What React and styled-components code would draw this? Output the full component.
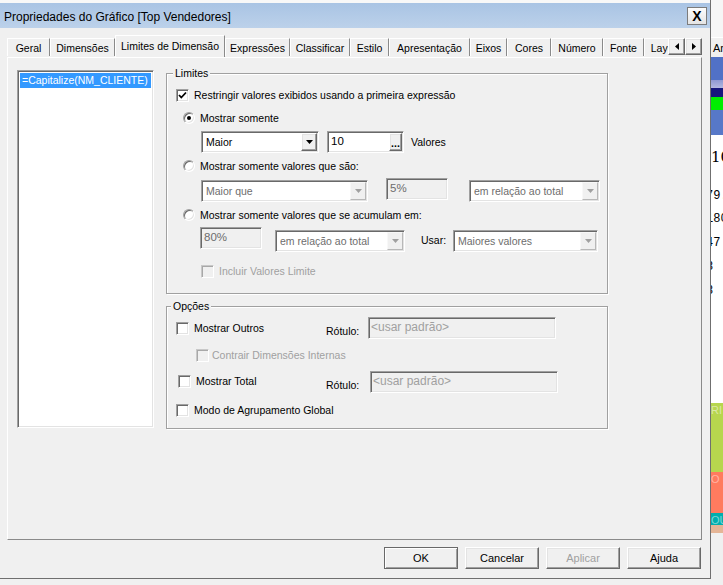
import React from "react";
import styled, { createGlobalStyle, css } from "styled-components";

const GlobalStyle = createGlobalStyle`
  html, body {
    margin: 0;
    padding: 0;
    background: #f0f0f0;
  }
  body {
    font-family: "Liberation Sans", Arial, sans-serif;
    font-size: 10.5px;
    color: #000;
  }
  * {
    box-sizing: border-box;
  }
`;

const sunken = css`
  border-style: solid;
  border-width: 1px;
  border-color: #a0a0a0 #fff #fff #a0a0a0;
  box-shadow: inset 1px 1px 0 #696969, inset -1px -1px 0 #e3e3e3;
`;

const raised = css`
  border-style: solid;
  border-width: 1px;
  border-color: #fff #696969 #696969 #fff;
  box-shadow: inset -1px -1px 0 #a0a0a0, inset 1px 1px 0 #e3e3e3;
`;

const TABS = [
  { label: "Geral", w: 43 },
  { label: "Dimensões", w: 65 },
  { label: "Limites de Dimensão", w: 110, active: true },
  { label: "Expressões", w: 65 },
  { label: "Classificar", w: 60 },
  { label: "Estilo", w: 39 },
  { label: "Apresentação", w: 81 },
  { label: "Eixos", w: 37 },
  { label: "Cores", w: 44 },
  { label: "Número", w: 52 },
  { label: "Fonte", w: 41 },
  { label: "Layout", w: 45 },
];

const Check = ({ checked, disabled }) => (
  <CheckBox $disabled={disabled}>
    {checked && (
      <svg width="9" height="9" viewBox="0 0 9 9">
        <polyline points="1,4 3.3,6.5 8,1.5" fill="none" stroke="#000" strokeWidth="1.8" />
      </svg>
    )}
  </CheckBox>
);

const Radio = ({ checked }) => (
  <RadioDot>{checked && <RadioMark />}</RadioDot>
);

const Arrow = ({ dir = "down", color = "#000" }) => {
  const pts = {
    down: "0,0 7,0 3.5,4",
    left: "4,0 4,7 0,3.5",
    right: "0,0 0,7 4,3.5",
  }[dir];
  const size = dir === "down" ? [7, 4] : [4, 7];
  return (
    <svg width={size[0]} height={size[1]} viewBox={`0 0 ${size[0]} ${size[1]}`}>
      <polygon points={pts} fill={color} />
    </svg>
  );
};

const Dropdown = ({ text, w, h = 22, ml, self, disabled }) => (
  <Select $w={w} $h={h} $ml={ml} $self={self}>
    <SelectText $disabled={disabled}>{text}</SelectText>
    <SelectButton $disabled={disabled}>
      <Arrow color={disabled ? "#a0a0a0" : "#000"} />
    </SelectButton>
  </Select>
);

export default function App() {
  return (
    <>
      <GlobalStyle />
      <Screen>
        <Dialog>
          <TopEdge />
          <TitleBar>
            <Title>Propriedades do Gráfico [Top Vendedores]</Title>
            <CloseButton>X</CloseButton>
          </TitleBar>
          <Body>
            <TabRow>
              <TabStrip>
                {TABS.map((t) => (
                  <Tab key={t.label} $w={t.w} $active={t.active}>
                    {t.label}
                  </Tab>
                ))}
              </TabStrip>
              <TabScroller>
                <ScrollButton>
                  <Arrow dir="left" />
                </ScrollButton>
                <ScrollButton>
                  <Arrow dir="right" />
                </ScrollButton>
              </TabScroller>
            </TabRow>
            <Panel>
              <ListBox>
                <ListItem>=Capitalize(NM_CLIENTE)</ListItem>
              </ListBox>
              <Groups>
                <Group $mt={3} $h={221}>
                  <Legend $left={6}>Limites</Legend>
                  <Row $mt={15} $h={13} $ml={9}>
                    <Check checked />
                    <Label>Restringir valores exibidos usando a primeira expressão</Label>
                  </Row>
                  <Row $mt={10} $h={12} $ml={16}>
                    <Radio checked />
                    <Label>Mostrar somente</Label>
                  </Row>
                  <Row $mt={7} $h={22} $ml={34}>
                    <Dropdown text="Maior" w={118} />
                    <TextBox $w={77} $h={22} $ml={8}>
                      <BoxText>10</BoxText>
                      <EllipsisButton>...</EllipsisButton>
                    </TextBox>
                    <Label $ml={7}>Valores</Label>
                  </Row>
                  <Row $mt={7} $h={12} $ml={16}>
                    <Radio />
                    <Label>Mostrar somente valores que são:</Label>
                  </Row>
                  <Row $mt={6} $h={24} $ml={34}>
                    <Dropdown text="Maior que" w={167} self="flex-end" disabled />
                    <TextBox $w={62} $h={22} $ml={18} $self="flex-start" $disabled>
                      <BoxText $disabled>5%</BoxText>
                    </TextBox>
                    <Dropdown text="em relação ao total" w={131} ml={21} self="flex-end" disabled />
                  </Row>
                  <Row $mt={7} $h={12} $ml={16}>
                    <Radio />
                    <Label>Mostrar somente valores que se acumulam em:</Label>
                  </Row>
                  <Row $mt={6} $h={25} $ml={33}>
                    <TextBox $w={62} $h={22} $self="flex-start" $disabled>
                      <BoxText $disabled>80%</BoxText>
                    </TextBox>
                    <Dropdown text="em relação ao total" w={130} ml={13} self="flex-end" disabled />
                    <Label $ml={16} $w={32} $self="flex-end" $pb={5}>
                      Usar:
                    </Label>
                    <Dropdown text="Maiores valores" w={145} self="flex-end" disabled />
                  </Row>
                  <Row $mt={13} $h={13} $ml={34}>
                    <Check disabled />
                    <Label $disabled>Incluir Valores Limite</Label>
                  </Row>
                </Group>

                <Group $mt={12} $h={123}>
                  <Legend $left={4}>Opções</Legend>
                  <Row $mt={10} $h={22} $ml={9}>
                    <CheckArea $w={150}>
                      <Check />
                      <Label>Mostrar Outros</Label>
                    </CheckArea>
                    <Label $ml={0} $w={42} $self="flex-end" $pb={1}>
                      Rótulo:
                    </Label>
                    <TextBox $w={188} $h={22} $disabled>
                      <Placeholder>&lt;usar padrão&gt;</Placeholder>
                    </TextBox>
                  </Row>
                  <Row $mt={10} $h={13} $ml={29}>
                    <Check disabled />
                    <Label $ml={3} $disabled>Contrair Dimensões Internas</Label>
                  </Row>
                  <Row $mt={8} $h={23} $ml={11}>
                    <CheckArea $w={148}>
                      <Check />
                      <Label>Mostrar Total</Label>
                    </CheckArea>
                    <Label $ml={0} $w={44} $self="flex-end" $pb={1}>
                      Rótulo:
                    </Label>
                    <TextBox $w={188} $h={22} $disabled>
                      <Placeholder>&lt;usar padrão&gt;</Placeholder>
                    </TextBox>
                  </Row>
                  <Row $mt={11} $h={13} $ml={9}>
                    <Check />
                    <Label>Modo de Agrupamento Global</Label>
                  </Row>
                </Group>
              </Groups>
            </Panel>
            <ButtonBar>
              <Button $default>OK</Button>
              <Button>Cancelar</Button>
              <Button $disabled>Aplicar</Button>
              <Button>Ajuda</Button>
            </ButtonBar>
          </Body>
        </Dialog>

        <AppStrip>
          <StripBlock $h={37} $bg="#f6f6f6" />
          <StripTab>Ar</StripTab>
          <StripBlock $h={23} $bg="#5171c6" />
          <StripBlock $h={8} $bg="linear-gradient(#8f98d2, #b4b8e0)" />
          <StripBlock $h={9} $bg="#17177c" />
          <StripBlock $h={13} $bg="#00ee00" />
          <StripBlock $h={25} $bg="#5778c8" />
          <NumberArea>
            <BigNum>10</BigNum>
            <Num $mt={25}>79.</Num>
            <Num $mt={10}>180</Num>
            <Num $mt={11}>47</Num>
            <Num $mt={11}>8</Num>
            <Num $mt={11} $ml={-5}>8</Num>
          </NumberArea>
          <StripBlock $h={69} $bg="#b7d64e" $fg="#dbe9a6">RI</StripBlock>
          <StripBlock $h={41} $bg="#ff7b5f" $fg="#ffb3a3">O</StripBlock>
          <StripBlock $h={12} $bg="#00aeae" $fg="#7fd6d6">OU</StripBlock>
          <StripBlock $h={8} $bg="#e5b596" />
        </AppStrip>
      </Screen>
    </>
  );
}

const Screen = styled.div`
  display: flex;
  width: 723px;
  height: 585px;
  overflow: hidden;
  background: #f0f0f0;
`;

const Dialog = styled.div`
  width: 711px;
  height: 579px;
  flex-shrink: 0;
  display: flex;
  flex-direction: column;
  background: #f0f0f0;
  border-right: 1px solid #6f6f6f;
  border-bottom: 1px solid #6f6f6f;
`;

const TopEdge = styled.div`
  height: 3px;
  background: #f8f8f8;
`;

const TitleBar = styled.div`
  height: 25px;
  display: flex;
  align-items: center;
  justify-content: space-between;
  padding: 0 3px 0 4px;
  background: linear-gradient(to bottom, #a9c4e4, #bcd1ea);
`;

const Title = styled.div`
  font-size: 12px;
  padding-top: 2px;
  color: #000;
`;

const CloseButton = styled.div`
  width: 20px;
  height: 18px;
  display: flex;
  align-items: center;
  justify-content: center;
  border: 1px solid #7c7c7c;
  background: linear-gradient(#fdfdfd, #e4e4e4);
  font-size: 14px;
  font-weight: bold;
`;

const Body = styled.div`
  flex: 1;
  display: flex;
  flex-direction: column;
  padding: 8px 8px 0 7px;
`;

const TabRow = styled.div`
  height: 21px;
  display: flex;
  align-items: flex-end;
`;

const TabStrip = styled.div`
  width: 661px;
  height: 22px;
  display: flex;
  align-items: flex-start;
  overflow: hidden;
  position: relative;
  z-index: 1;
`;

const Tab = styled.div`
  flex-shrink: 0;
  width: ${(p) => p.$w}px;
  height: ${(p) => (p.$active ? 22 : 18)}px;
  margin-top: ${(p) => (p.$active ? 0 : 3)}px;
  display: flex;
  align-items: center;
  justify-content: center;
  white-space: nowrap;
  background: #f0f0f0;
  border-top: 1px solid #fff;
  border-left: 1px solid #fff;
  border-right: 1px solid #8a8a8a;
  padding-bottom: ${(p) => (p.$active ? 2 : 0)}px;
`;

const TabScroller = styled.div`
  display: flex;
  align-self: flex-start;
  margin-top: 2px;
`;

const ScrollButton = styled.div`
  width: 17px;
  height: 17px;
  display: flex;
  align-items: center;
  justify-content: center;
  background: #f0f0f0;
  ${raised};
`;

const Panel = styled.div`
  height: 483px;
  display: flex;
  align-items: flex-start;
  padding: 12px 0 0 9px;
  border-top: 1px solid #fff;
  border-left: 1px solid #fff;
  border-right: 1px solid #8a8a8a;
  border-bottom: 1px solid #8a8a8a;
`;

const ListBox = styled.div`
  width: 137px;
  height: 358px;
  background: #fff;
  padding: 2px;
  ${sunken};
`;

const ListItem = styled.div`
  height: 15px;
  line-height: 15px;
  padding-left: 2px;
  background: #3399ff;
  color: #fff;
  white-space: nowrap;
`;

const Groups = styled.div`
  width: 442px;
  margin-left: 12px;
  display: flex;
  flex-direction: column;
`;

const Group = styled.div`
  position: relative;
  height: ${(p) => p.$h}px;
  margin-top: ${(p) => p.$mt}px;
  border: 1px solid #a0a0a0;
  box-shadow: inset 1px 1px 0 #fff, 1px 1px 0 #fff;
`;

const Legend = styled.div`
  position: absolute;
  top: -7px;
  left: ${(p) => p.$left}px;
  padding: 0 2px;
  line-height: 13px;
  background: #f0f0f0;
`;

const Row = styled.div`
  display: flex;
  align-items: center;
  height: ${(p) => p.$h}px;
  margin-top: ${(p) => p.$mt}px;
  padding-left: ${(p) => p.$ml}px;
`;

const CheckArea = styled.div`
  width: ${(p) => p.$w}px;
  display: flex;
  align-items: center;
`;

const Label = styled.span`
  margin-left: ${(p) => (p.$ml !== undefined ? p.$ml : 5)}px;
  width: ${(p) => (p.$w ? `${p.$w}px` : "auto")};
  align-self: ${(p) => p.$self || "auto"};
  padding-bottom: ${(p) => p.$pb || 0}px;
  flex-shrink: 0;
  white-space: nowrap;
  color: ${(p) => (p.$disabled ? "#a0a0a0" : "#000")};
  line-height: 13px;
`;

const CheckBox = styled.div`
  width: 13px;
  height: 13px;
  flex-shrink: 0;
  display: flex;
  align-items: center;
  justify-content: center;
  background: ${(p) => (p.$disabled ? "#f0f0f0" : "#fff")};
  ${sunken};
  ${(p) =>
    p.$disabled &&
    css`
      border-color: #c8c8c8 #fff #fff #c8c8c8;
      box-shadow: inset 1px 1px 0 #a8a8a8;
    `}
`;

const RadioDot = styled.div`
  width: 12px;
  height: 12px;
  flex-shrink: 0;
  border-radius: 50%;
  display: flex;
  align-items: center;
  justify-content: center;
  background: #fff;
  ${sunken};
`;

const RadioMark = styled.div`
  width: 4px;
  height: 4px;
  border-radius: 50%;
  background: #000;
`;

const Select = styled.div`
  width: ${(p) => p.$w}px;
  height: ${(p) => p.$h}px;
  margin-left: ${(p) => p.$ml || 0}px;
  align-self: ${(p) => p.$self || "auto"};
  flex-shrink: 0;
  display: flex;
  padding: 1px;
  background: #fff;
  ${sunken};
`;

const SelectText = styled.div`
  flex: 1;
  display: flex;
  align-items: center;
  padding-left: 3px;
  white-space: nowrap;
  color: ${(p) => (p.$disabled ? "#6d6d6d" : "#000")};
`;

const SelectButton = styled.div`
  width: 16px;
  display: flex;
  align-items: center;
  justify-content: center;
  background: #f0f0f0;
  ${raised};
  ${(p) =>
    p.$disabled &&
    css`
      border-color: #f8f8f8 #b8b8b8 #b8b8b8 #f8f8f8;
      box-shadow: none;
    `}
`;

const TextBox = styled.div`
  width: ${(p) => p.$w}px;
  height: ${(p) => p.$h}px;
  margin-left: ${(p) => p.$ml || 0}px;
  align-self: ${(p) => p.$self || "auto"};
  flex-shrink: 0;
  display: flex;
  padding: 1px;
  background: ${(p) => (p.$disabled ? "#f0f0f0" : "#fff")};
  ${sunken};
`;

const BoxText = styled.div`
  flex: 1;
  padding: 2px 0 0 2px;
  font-size: 11.5px;
  color: ${(p) => (p.$disabled ? "#6d6d6d" : "#000")};
`;

const Placeholder = styled.div`
  flex: 1;
  padding: 1px 0 0 1px;
  font-size: 12px;
  color: #a0a0a0;
  white-space: nowrap;
`;

const EllipsisButton = styled.div`
  width: 13px;
  display: flex;
  align-items: flex-end;
  justify-content: center;
  font-weight: bold;
  line-height: 11px;
  padding-bottom: 1px;
  background: #f0f0f0;
  ${raised};
`;

const ButtonBar = styled.div`
  display: flex;
  justify-content: flex-end;
  gap: 7px;
  margin-top: 7px;
  padding-right: 1px;
`;

const Button = styled.div`
  width: 74px;
  height: 22px;
  display: flex;
  align-items: center;
  justify-content: center;
  font-size: 11px;
  background: #f0f0f0;
  color: ${(p) => (p.$disabled ? "#a0a0a0" : "#000")};
  ${raised};
  ${(p) =>
    p.$default &&
    css`
      border-color: #696969;
      box-shadow: inset 1px 1px 0 #fff, inset -1px -1px 0 #a0a0a0;
    `}
`;

const AppStrip = styled.div`
  flex: 1;
  display: flex;
  flex-direction: column;
  overflow: hidden;
`;

const StripBlock = styled.div`
  height: ${(p) => p.$h}px;
  flex-shrink: 0;
  background: ${(p) => p.$bg};
  color: ${(p) => p.$fg || "transparent"};
  font-size: 11px;
  line-height: 14px;
  white-space: nowrap;
  overflow: hidden;
`;

const StripTab = styled.div`
  height: 20px;
  flex-shrink: 0;
  display: flex;
  align-items: center;
  padding-left: 2px;
  background: #f0f0f0;
  border-top: 1px solid #fff;
  font-size: 11px;
  white-space: nowrap;
`;

const NumberArea = styled.div`
  height: 268px;
  flex-shrink: 0;
  display: flex;
  flex-direction: column;
  background: #fff;
  overflow: hidden;
`;

const BigNum = styled.div`
  margin-top: 14px;
  margin-left: 0;
  font-family: "DejaVu Serif", serif;
  font-size: 15px;
  line-height: 16px;
  white-space: nowrap;
`;

const Num = styled.div`
  margin-top: ${(p) => p.$mt}px;
  margin-left: ${(p) => (p.$ml !== undefined ? p.$ml : -5)}px;
  font-family: "Liberation Mono", monospace;
  font-size: 12px;
  line-height: 13px;
  white-space: nowrap;
`;
